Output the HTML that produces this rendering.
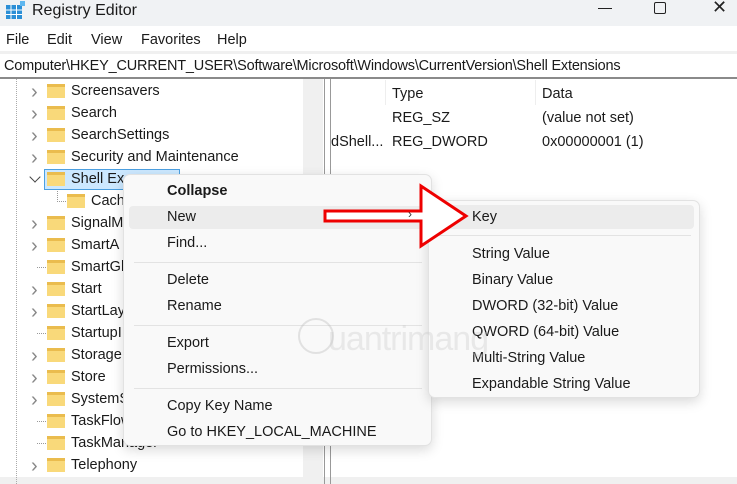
<!DOCTYPE html>
<html><head><meta charset="utf-8"><style>
*{margin:0;padding:0;box-sizing:border-box}
body{width:737px;height:484px;overflow:hidden;position:relative;background:#fff;font-family:"Liberation Sans",sans-serif;font-size:14.5px;color:#1a1a1a}
.a{position:absolute;white-space:nowrap}
.t{line-height:20px}
.fold{position:absolute;width:18px;height:14px;background:#f9d97a;border-top:3px solid #eabc4e}
.chev{position:absolute;font-size:20px;line-height:20px;color:#888}
.sep{position:absolute;height:1px;background:#e3e3e3}
</style></head><body>
<div class="a" style="left:0;top:0;width:737px;height:26px;background:#f0f2f4"></div>
<svg class="a" style="left:6px;top:1px" width="20" height="18"><rect x="0" y="4" width="16" height="14" fill="#2b8fd6"/><g stroke="#fff" stroke-width="1"><line x1="0" y1="9" x2="16" y2="9"/><line x1="0" y1="13.5" x2="16" y2="13.5"/><line x1="5" y1="4" x2="5" y2="18"/><line x1="10.5" y1="4" x2="10.5" y2="18"/></g><rect x="14" y="0" width="5" height="5" fill="#5fb7ef"/></svg>
<div class="a t" style="left:32px;top:1px;font-size:16px">Registry Editor</div>
<div class="a" style="left:598px;top:8px;width:14px;height:1px;background:#222"></div>
<div class="a" style="left:654px;top:2px;width:12px;height:12px;border:1.3px solid #222;border-radius:2px"></div>
<div class="a" style="left:712px;top:-3px;font-size:18px;color:#222">✕</div>
<div class="a t" style="left:6px;top:30px">File</div>
<div class="a t" style="left:47px;top:30px">Edit</div>
<div class="a t" style="left:91px;top:30px">View</div>
<div class="a t" style="left:141px;top:30px">Favorites</div>
<div class="a t" style="left:217px;top:30px">Help</div>
<div class="a" style="left:0;top:51px;width:737px;height:3px;background:#f0f0f0"></div>
<div class="a t" style="left:4px;top:56px;letter-spacing:-0.2px">Computer\HKEY_CURRENT_USER\Software\Microsoft\Windows\CurrentVersion\Shell Extensions</div>
<div class="a" style="left:0;top:77px;width:737px;height:2px;background:#8a8a8a"></div>
<div class="a" style="left:303px;top:79px;width:20px;height:398px;background:#f0f0f0"></div>
<div class="a" style="left:0;top:477px;width:737px;height:7px;background:#f0f0f0"></div>
<div class="a" style="left:324px;top:79px;width:1px;height:405px;background:#999"></div>
<div class="a" style="left:330px;top:79px;width:1px;height:405px;background:#999"></div>
<div class="a" style="left:385px;top:80px;width:1px;height:25px;background:#eee"></div>
<div class="a" style="left:535px;top:80px;width:1px;height:25px;background:#eee"></div>
<div class="a" style="left:16px;top:79px;width:1px;height:405px;border-left:1px dotted #aaa"></div>
<div class="a t" style="left:392px;top:84px">Type</div>
<div class="a t" style="left:542px;top:84px">Data</div>
<div class="a t" style="left:392px;top:108px">REG_SZ</div>
<div class="a t" style="left:542px;top:108px">(value not set)</div>
<div class="a t" style="left:331px;top:132px">dShell...</div>
<div class="a t" style="left:392px;top:132px">REG_DWORD</div>
<div class="a t" style="left:542px;top:132px">0x00000001 (1)</div>
<div class="a" style="left:44px;top:169px;width:136px;height:21px;background:#cce8ff;border:1px solid #4c9fe0"></div>
<div id="tree"></div>
<script>
var items=[["Screensavers",1],["Search",1],["SearchSettings",1],["Security and Maintenance",1],["Shell Ex",2],["Cach",0,1],["SignalM",1],["SmartA",1],["SmartGl",0],["Start",1],["StartLay",1],["StartupI",0],["Storage",1],["Store",1],["SystemS",1],["TaskFlow",0],["TaskManager",0],["Telephony",1]];
var h="";items.forEach(function(it,i){var y=91+i*22;var x=it[2]?67:47;
if(it[1]==1)h+='<div class="chev a" style="left:31px;top:'+(y-9)+'px">›</div>';
if(it[1]==2)h+='<div class="a" style="left:31px;top:'+(y-6)+'px;width:8px;height:8px;border-right:1.5px solid #444;border-bottom:1.5px solid #444;transform:rotate(45deg)"></div>';
if(it[1]==0&&!it[2])h+='<div class="a" style="left:37px;top:'+y+'px;width:9px;border-top:1px dotted #999"></div>';
if(it[2])h+='<div class="a" style="left:57px;top:'+(y-10)+'px;width:9px;height:11px;border-left:1px dotted #999;border-bottom:1px dotted #999"></div>';
h+='<div class="fold" style="left:'+x+'px;top:'+(y-7)+'px"></div><div class="a t" style="left:'+(x+24)+'px;top:'+(y-10)+'px">'+it[0]+'</div>';});
document.getElementById("tree").innerHTML=h;
</script>
<div class="a" style="left:123px;top:174px;width:309px;height:272px;background:#f9f9f9;border:1px solid #e2e2e2;border-radius:7px;box-shadow:0 4px 12px rgba(0,0,0,.15)">
<div class="a" style="left:5px;top:31px;width:297px;height:23px;background:#ececec;border-radius:4px"></div>
<div class="a t" style="left:43px;top:6px;font-weight:bold">Collapse</div>
<div class="a t" style="left:43px;top:32px">New</div>
<div class="a t" style="left:43px;top:58px">Find...</div>
<div class="sep" style="left:10px;top:87px;width:288px"></div>
<div class="a t" style="left:43px;top:95px">Delete</div>
<div class="a t" style="left:43px;top:121px">Rename</div>
<div class="sep" style="left:10px;top:150px;width:288px"></div>
<div class="a t" style="left:43px;top:158px">Export</div>
<div class="a t" style="left:43px;top:184px">Permissions...</div>
<div class="sep" style="left:10px;top:213px;width:288px"></div>
<div class="a t" style="left:43px;top:221px">Copy Key Name</div>
<div class="a t" style="left:43px;top:247px">Go to HKEY_LOCAL_MACHINE</div>
</div>
<div class="a" style="left:428px;top:200px;width:272px;height:198px;background:#f9f9f9;border:1px solid #e2e2e2;border-radius:7px;box-shadow:0 4px 12px rgba(0,0,0,.15)">
<div class="a" style="left:5px;top:4px;width:260px;height:24px;background:#ececec;border-radius:4px"></div>
<div class="a t" style="left:43px;top:6px">Key</div>
<div class="sep" style="left:10px;top:34px;width:252px"></div>
<div class="a t" style="left:43px;top:43px">String Value</div>
<div class="a t" style="left:43px;top:69px">Binary Value</div>
<div class="a t" style="left:43px;top:95px">DWORD (32-bit) Value</div>
<div class="a t" style="left:43px;top:121px">QWORD (64-bit) Value</div>
<div class="a t" style="left:43px;top:147px">Multi-String Value</div>
<div class="a t" style="left:43px;top:173px">Expandable String Value</div>
</div>
<svg class="a" style="left:320px;top:182px" width="155" height="70"><path d="M5 29 H101 L101 4 L146 34 L101 64 L101 39 H5 Z" fill="#fff" stroke="#e00" stroke-width="3"/></svg>
<div class="a" style="left:408px;top:207px;font-size:12px;color:#333">›</div>
<div class="a" style="left:298px;top:318px;width:36px;height:36px;border:2px solid rgba(190,190,190,.4);border-radius:50%"></div>
<div class="a" style="left:328px;top:320px;font-size:34px;color:rgba(200,200,200,.35);letter-spacing:-1px">uantrimang</div>
</body></html>
